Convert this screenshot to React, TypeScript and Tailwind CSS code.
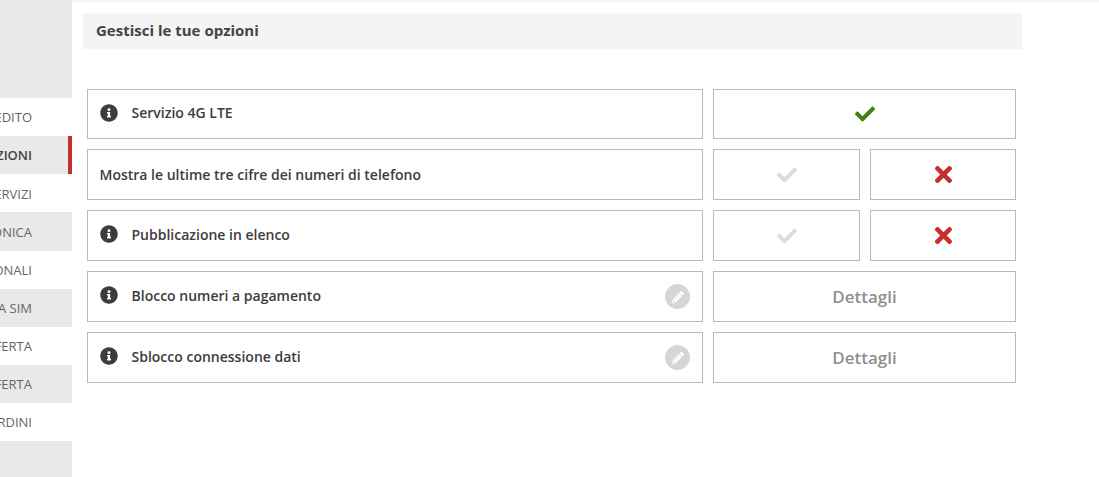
import { FaCheck, FaInfoCircle, FaPencilAlt, FaTimes } from 'react-icons/fa'

const menu = [
  { label: 'CREDITO' },
  { label: 'OPZIONI', active: true },
  { label: 'SERVIZI' },
  { label: 'TELEFONICA' },
  { label: 'PROMOZIONALI' },
  { label: 'LA TUA SIM' },
  { label: 'OFFERTA' },
  { label: 'OFFERTA' },
  { label: 'ORDINI' },
]

interface Option {
  title: string
  info?: boolean
  edit?: boolean
  height: string
  kind: 'on' | 'toggle' | 'details'
}

const options: Option[] = [
  { title: 'Servizio 4G LTE', info: true, height: 'h-[50px]', kind: 'on' },
  { title: 'Mostra le ultime tre cifre dei numeri di telefono', height: 'h-[51px]', kind: 'toggle' },
  { title: 'Pubblicazione in elenco', info: true, height: 'h-[51px]', kind: 'toggle' },
  { title: 'Blocco numeri a pagamento', info: true, edit: true, height: 'h-[51px]', kind: 'details' },
  { title: 'Sblocco connessione dati', info: true, edit: true, height: 'h-[51px]', kind: 'details' },
]

const box = 'flex items-center justify-center border border-[#b9b9b9] bg-white'

function Sidebar() {
  return (
    <aside className="flex h-[477px] w-[72px] shrink-0 flex-col bg-[#e9e9e9] pt-[98px]">
      {menu.map((item, i) => (
        <div
          key={item.label + i}
          className={`flex h-[38.125px] shrink-0 items-center justify-end overflow-hidden whitespace-nowrap pt-[2px] text-[13px] ${
            i % 2 === 0 ? 'bg-white' : 'bg-[#e9e9e9]'
          } ${item.active ? 'border-r-4 border-[#c5302c] pr-[36px] font-semibold text-[#444]' : 'pr-[40px] text-[#666]'}`}
        >
          {item.label}
        </div>
      ))}
    </aside>
  )
}

function OptionRow({ option }: { option: Option }) {
  return (
    <div className={`flex gap-[10px] ${option.height}`}>
      <div className="flex w-[616px] items-center border border-[#b9b9b9] bg-white pl-[11.5px] pr-3">
        <div className={`flex items-center ${option.info ? 'pb-[3px]' : ''}`}>
          {option.info && <FaInfoCircle className="mr-[14px] h-[18px] w-[18px] shrink-0 text-[#3c3c3c]" />}
          <span className="text-[14px] font-semibold text-[#3c3c3c]">{option.title}</span>
        </div>
        {option.edit && (
          <span className="ml-auto flex h-[25px] w-[25px] items-center justify-center rounded-full bg-[#d6d6d6]">
            <FaPencilAlt className="h-[12px] w-[12px] text-white" />
          </span>
        )}
      </div>
      {option.kind === 'on' && (
        <div className={`${box} w-[303px]`}>
          <FaCheck className="h-[20px] w-[20px] text-[#3f8210]" />
        </div>
      )}
      {option.kind === 'toggle' && (
        <div className="flex w-[303px] gap-[10px]">
          <div className={`${box} w-[147px]`}>
            <FaCheck className="h-[20px] w-[20px] text-[#dcdcdc]" />
          </div>
          <div className={`${box} w-[146px]`}>
            <FaTimes className="h-[25px] w-[25px] text-[#c5302c]" />
          </div>
        </div>
      )}
      {option.kind === 'details' && (
        <div className={`${box} w-[303px] text-[17px] font-semibold text-[#8f8f8f]`}>Dettagli</div>
      )}
    </div>
  )
}

export default function App() {
  return (
    <div className="flex h-[477px] overflow-hidden bg-white font-['Open_Sans',sans-serif]">
      <Sidebar />
      <main className="flex-1">
        <div className="h-[3px] bg-[#f8f8f8]" />
        <div className="ml-[11px] mt-[10px] flex h-[36px] w-[939px] items-center bg-[#f4f4f4] pb-[2px] pl-[13px] text-[15px] font-bold text-[#444]">
          Gestisci le tue opzioni
        </div>
        <div className="ml-[15px] mt-[40px] flex flex-col gap-[10px]">
          {options.map((option) => (
            <OptionRow key={option.title} option={option} />
          ))}
        </div>
      </main>
    </div>
  )
}
